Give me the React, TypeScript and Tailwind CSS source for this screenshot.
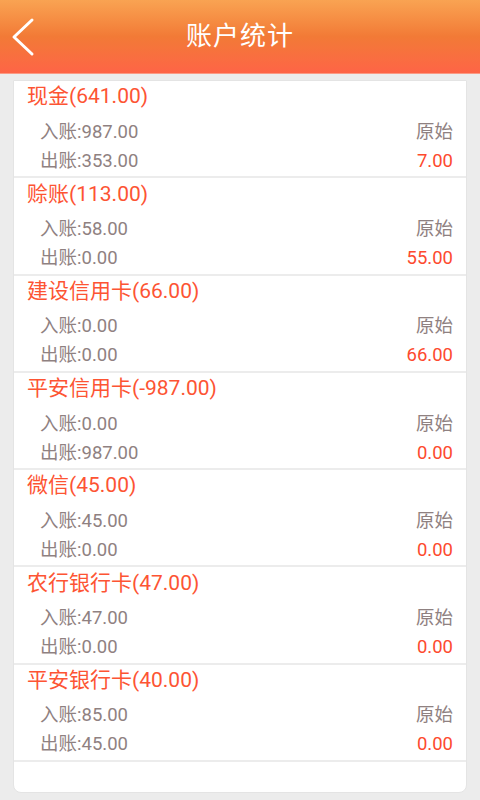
const ACCOUNTS = [
  { name: "现金", total: "641.00", inAmt: "987.00", outAmt: "353.00", diff: "7.00" },
  { name: "赊账", total: "113.00", inAmt: "58.00", outAmt: "0.00", diff: "55.00" },
  { name: "建设信用卡", total: "66.00", inAmt: "0.00", outAmt: "0.00", diff: "66.00" },
  { name: "平安信用卡", total: "-987.00", inAmt: "0.00", outAmt: "987.00", diff: "0.00" },
  { name: "微信", total: "45.00", inAmt: "45.00", outAmt: "0.00", diff: "0.00" },
  { name: "农行银行卡", total: "47.00", inAmt: "47.00", outAmt: "0.00", diff: "0.00" },
  { name: "平安银行卡", total: "40.00", inAmt: "85.00", outAmt: "45.00", diff: "0.00" },
];

const FONT = "font-['Roboto','Noto_Sans_CJK_SC',sans-serif]";

function BackArrow() {
  return (
    <svg width="24" height="40" viewBox="0 0 24 40" fill="none">
      <polyline
        points="21,3 3,20 21,37"
        stroke="white"
        strokeWidth="3"
        strokeLinecap="round"
        strokeLinejoin="round"
      />
    </svg>
  );
}

export default function App() {
  return (
    <div className={`w-[480px] h-[800px] overflow-hidden bg-[#ececec] ${FONT}`}>
      {/* Title bar */}
      <header className="relative h-[74px] flex items-center justify-center bg-gradient-to-b from-[#f9a352] via-[#f27a36] to-[#fe6446] border-b border-[#fb9a84]">
        <button className="absolute left-[11px] top-[17px]">
          <BackArrow />
        </button>
        <h1 className="text-[26px] text-white tracking-[1px]">账户统计</h1>
      </header>

      {/* Account list */}
      <div className="mx-[13px] mt-[6px] h-[713px] bg-white border border-[#e4e4e4] rounded-b-[8px] overflow-hidden">
        {ACCOUNTS.map((a) => (
          <div key={a.name} className="h-[97.3px] border-b-2 border-[#ececec]">
            <div className="h-[32px] pl-[13px] flex items-center text-[21px] text-[#fd5433]">
              {a.name}({a.total})
            </div>
            <div className="mt-[5px] pl-[26px] pr-[13px] h-[29px] flex items-center justify-between text-[18.5px] text-[#8f8181]">
              <span>入账:{a.inAmt}</span>
              <span>原始</span>
            </div>
            <div className="pl-[26px] pr-[13px] h-[29px] flex items-center justify-between text-[18.5px]">
              <span className="text-[#8f8181]">出账:{a.outAmt}</span>
              <span className="text-[#fd4a2e]">{a.diff}</span>
            </div>
          </div>
        ))}
      </div>
    </div>
  );
}
